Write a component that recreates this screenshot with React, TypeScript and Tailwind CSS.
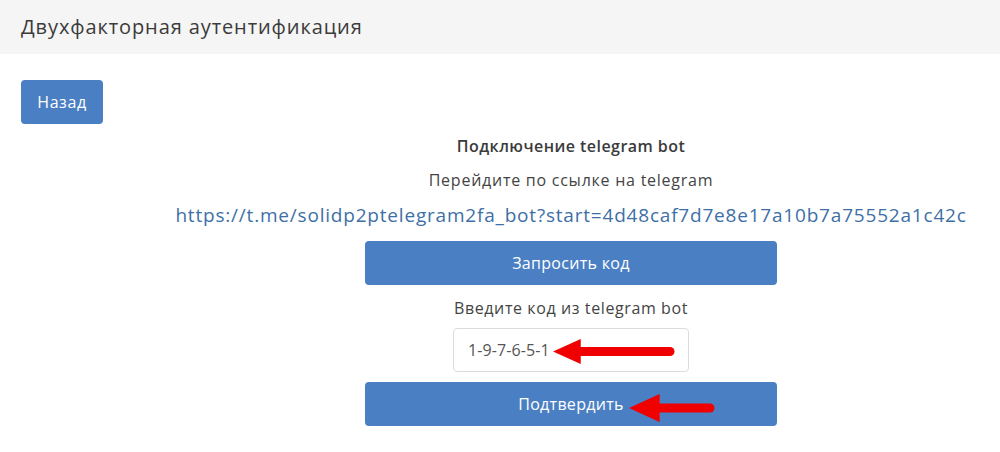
import React from "react";

function RedArrow({ width, height }: { width: number; height: number }) {
  // arrow pointing left, drawn into a box of width x height
  const mid = height / 2;
  const head = height * 0.95;
  return (
    <svg width={width} height={height} viewBox={`0 0 ${width} ${height}`}>
      <line
        x1={head}
        y1={mid}
        x2={width - 5}
        y2={mid}
        stroke="#f00000"
        strokeWidth={9}
        strokeLinecap="round"
      />
      <polygon points={`0,${mid} ${head + 4},0 ${head + 4},${height}`} fill="#f00000" />
    </svg>
  );
}

function TwoFactor() {
  return (
    <div className="w-[1000px] h-[452px] bg-white text-[#444] font-['Open_Sans',sans-serif] tracking-[0.6px]">
      <div className="h-[54px] bg-[#f5f5f5] flex items-center px-[21px]">
        <h2 className="text-[20px] text-[#3b3b3b] tracking-[0.9px]">
          Двухфакторная аутентификация
        </h2>
      </div>
      <div className="px-[21px] pt-[26px]">
        <button className="h-[44px] w-[82px] rounded-[4px] bg-[#4a7fc4] text-white text-[16px]">
          Назад
        </button>
      </div>
      <div className="flex">
        <div className="w-[142px] shrink-0" />
        <div className="flex-1 flex flex-col items-center">
          <p className="mt-[10px] text-[16px] font-semibold text-[#3b3b3b] leading-[24px] tracking-[0.45px]">
            Подключение telegram bot
          </p>
          <p className="mt-[10px] text-[16px] leading-[24px] tracking-[0.75px]">
            Перейдите по ссылке на telegram
          </p>
          <a className="mt-[11px] text-[19px] text-[#3e6fa6] leading-[24px] whitespace-nowrap tracking-[0.8px]">
            https://t.me/solidp2ptelegram2fa_bot?start=4d48caf7d7e8e17a10b7a75552a1c42c
          </a>
          <button className="mt-[14px] h-[44px] w-[412px] rounded-[4px] bg-[#4a7fc4] text-white text-[16px] tracking-[0.3px]">
            Запросить код
          </button>
          <p className="mt-[11px] text-[16px] leading-[24px] tracking-[0.6px]">
            Введите код из telegram bot
          </p>
          <div className="relative mt-[8px] h-[44px] w-[236px] rounded-[4px] border border-[#dcdcdc] flex items-center px-[14px]">
            <span className="text-[16px] text-[#555] tracking-[0.1px]">1-9-7-6-5-1</span>
            <div className="absolute left-[99px] top-[10px]">
              <RedArrow width={122} height={25} />
            </div>
          </div>
          <div className="relative mt-[10px]">
            <button className="h-[44px] w-[412px] rounded-[4px] bg-[#4a7fc4] text-white text-[16px] tracking-[0.3px]">
              Подтвердить
            </button>
            <div className="absolute left-[264px] top-[12px]">
              <RedArrow width={86} height={28} />
            </div>
          </div>
        </div>
      </div>
    </div>
  );
}

export default function App() {
  return <TwoFactor />;
}
